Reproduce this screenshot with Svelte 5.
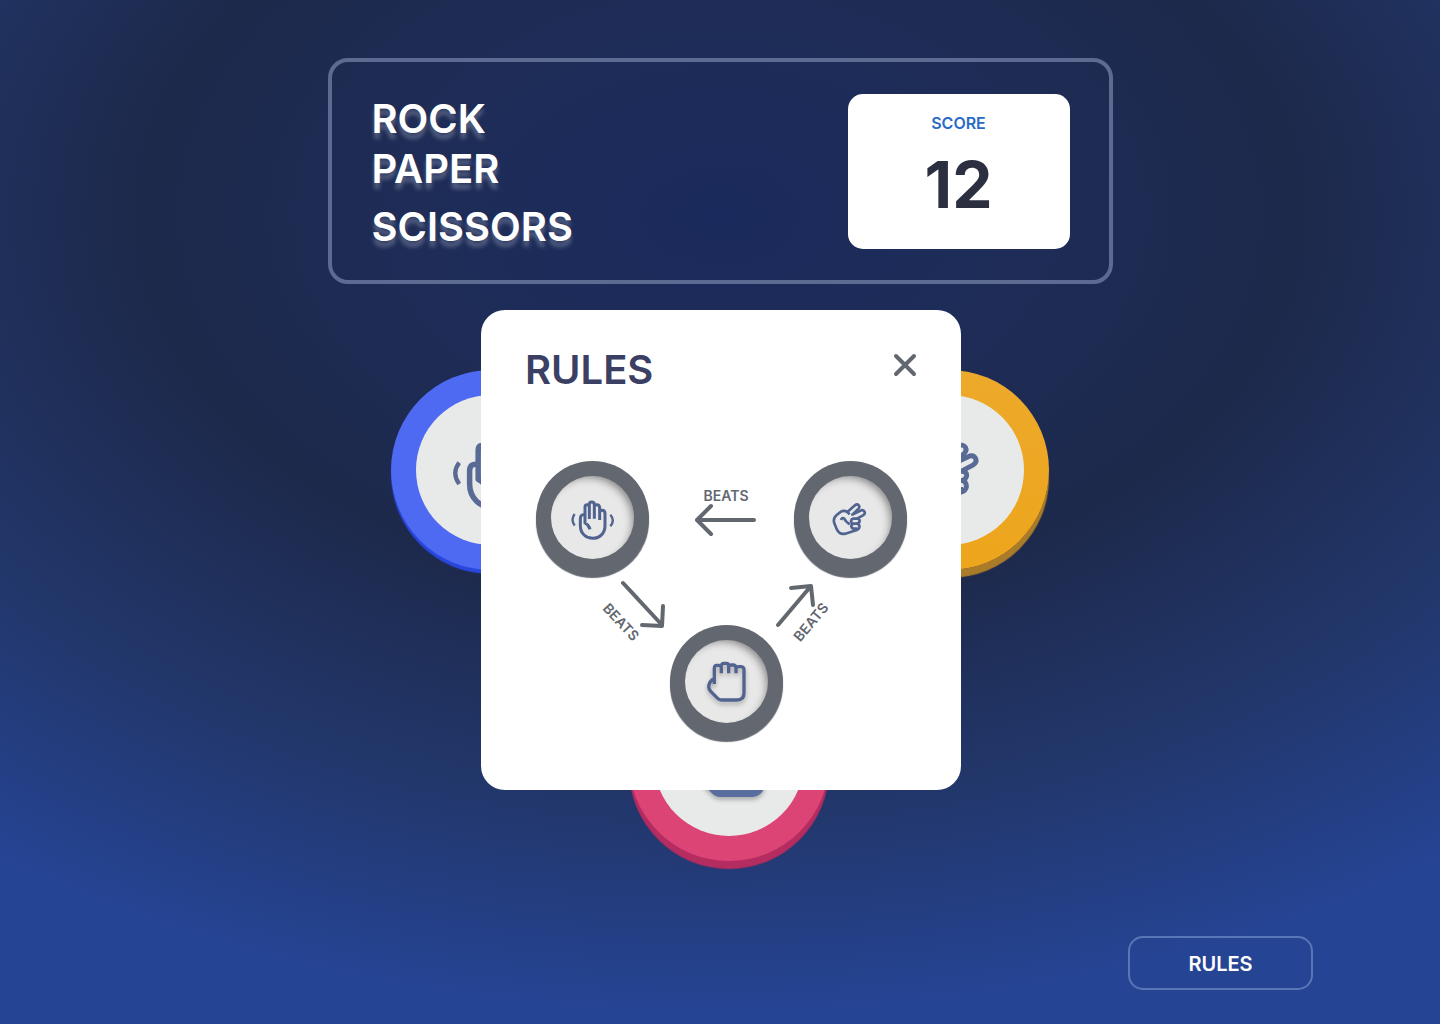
<script>
  let open = $state(true);
  const score = 12;
</script>

{#snippet hand(kind)}
  {#if kind === 'paper'}
    <svg class="icon" viewBox="129 130 144 144" aria-hidden="true">
      <path d="M180 193Q166 190 166 204V225C166 249 184 263 203 263C224 263 240 248 240 225V188Q239 179 232 179Q227 179 224 182" />
      <path d="M224 208V171Q223 162 216 162Q211 162 208 165M208 204V162Q208 154 200 154Q193 154 193 162V205M193 165Q190 162 186 162Q180 162 180 170V217Q192 223 195 236" />
      <path class="thin" d="M149 190Q136 207 149 225M256 192Q271 209 256 227" />
    </svg>
  {:else if kind === 'scissors'}
    <svg class="icon fine" viewBox="122 130 144 144" aria-hidden="true">
      <path d="M193 191L186 184Q176 178 167 183L154 193Q142 203 147 218L155 237Q163 253 180 249L217 237Q224 233 222 225Q220 219 213 219" />
      <path d="M186 184L209 164Q216 158 221 165Q224 170 218 176L201 192L228 179Q235 177 238 184Q240 190 233 194L216 203" />
      <path d="M204 204H216Q223 205 223 211Q222 218 215 219H204Q197 218 197 211Q198 205 204 204ZM204 219Q197 222 198 228Q200 235 207 234H217" />
      <path d="M167 208Q170 200 176 203Q181 213 193 221" />
    </svg>
  {:else}
    <svg class="icon lifted" viewBox="126 125 144 144" aria-hidden="true">
      <path d="M163 203V156Q163 147 170 147H176Q184 147 184 155V171M184 149Q185 141 191 141H199Q206 141 206 149V171M206 151Q208 146 213 146H220Q228 147 228 155V171M228 156Q230 151 236 151H243Q252 152 252 160V230Q252 251 231 251H184Q178 251 173 246L152 225Q144 215 147 206Q150 192 163 187" />
    </svg>
  {/if}
{/snippet}

<div class="page">
  <header class="scoreboard">
    <h1><span>ROCK</span><span>PAPER</span><span class="last">SCISSORS</span></h1>
    <div class="score">
      <span class="score-label">SCORE</span>
      <strong>{score}</strong>
    </div>
  </header>

  <main class="board">
    <div class="row">
      <button class="token paper" aria-label="Paper"><span class="face">{@render hand('paper')}</span></button>
      <button class="token scissors" aria-label="Scissors"><span class="face">{@render hand('scissors')}</span></button>
    </div>
    <div class="row bottom">
      <button class="token rock" aria-label="Rock"><span class="face">{@render hand('rock')}</span></button>
    </div>
  </main>

  <footer>
    <button class="rules-button" onclick={() => (open = true)}>RULES</button>
  </footer>
</div>

{#if open}
  <div class="overlay">
    <div class="modal" role="dialog" aria-modal="true" aria-labelledby="rules-title">
      <div class="modal-head">
        <h2 id="rules-title">RULES</h2>
        <button class="close" aria-label="Close" onclick={() => (open = false)}>
          <svg viewBox="0 0 24 24" aria-hidden="true"><path d="M3 3L21 21M21 3L3 21" /></svg>
        </button>
      </div>
      <div class="diagram">
        <div class="node n-paper"><span class="face">{@render hand('paper')}</span></div>
        <div class="node n-scissors"><span class="face">{@render hand('scissors')}</span></div>
        <div class="node n-rock"><span class="face">{@render hand('rock')}</span></div>
        <svg class="links" viewBox="0 0 371 281">
          <path d="M218 59H162M175 45L161 59L175 73" />
          <path d="M87 122L126 164M127 145L126 165L106 164" />
          <path d="M242 164L275 125M255 127L275 125L277 144" />
          <text x="190" y="40">BEATS</text>
          <text transform="translate(85 161) rotate(47)" y="5">BEATS</text>
          <text transform="translate(275 161) rotate(-50)" y="5">BEATS</text>
        </svg>
      </div>
    </div>
  </div>
{/if}

<style>
  :global(body) {
    margin: 0;
    font-family: Inter, 'Liberation Sans', sans-serif;
  }

  .page {
    box-sizing: border-box;
    min-height: 100vh;
    padding: 58px 24px 34px;
    display: flex;
    flex-direction: column;
    align-items: center;
    background: radial-gradient(
      ellipse 85% 800px at 50% 215px,
      #1a2a5c 0%,
      #1e2c57 25%,
      #1d294b 47%,
      #22376c 75%,
      #254494 100%
    );
  }

  button {
    font: inherit;
    padding: 0;
    border: 0;
    background: none;
    cursor: pointer;
  }

  .scoreboard {
    box-sizing: border-box;
    width: 100%;
    max-width: 785px;
    padding: 32px 39px 28px 40px;
    border: 4px solid #5b6b91;
    border-radius: 20px;
    display: flex;
    justify-content: space-between;
    align-items: flex-start;
  }

  h1 {
    margin: 0;
    display: flex;
    flex-direction: column;
    color: #fff;
    font-size: 40px;
    font-weight: 600;
    line-height: 50px;
    text-shadow: 0 6px 4px rgba(255, 255, 255, 0.25);
  }

  .last {
    margin-top: 8px;
  }

  .score {
    box-sizing: border-box;
    width: 222px;
    min-height: 155px;
    padding: 19px 16px;
    border-radius: 15px;
    background: #fff;
    display: flex;
    flex-direction: column;
    align-items: center;
    gap: 16px;
  }

  .score-label {
    color: #2a6ac6;
    font-size: 16px;
    font-weight: 600;
    line-height: 20px;
  }

  .score strong {
    color: #2b2f3f;
    font-size: 64px;
    font-weight: 700;
    line-height: 72px;
  }

  .board {
    width: 100%;
    max-width: 658px;
    margin-top: 86px;
    display: flex;
    flex-direction: column;
    gap: 91px;
  }

  .row {
    display: flex;
    justify-content: space-between;
  }

  .bottom {
    justify-content: center;
    padding-left: 18px;
  }

  .token,
  .node,
  .face {
    border-radius: 50%;
    display: grid;
    place-items: center;
  }

  .token {
    width: 200px;
    height: 200px;
  }

  .token .face {
    width: 150px;
    height: 150px;
    background: #e8eaea;
  }

  .token .icon {
    width: 88px;
    height: 88px;
    stroke: #596a94;
  }

  .token .lifted {
    fill: #596e9e;
    stroke: #596e9e;
  }

  .paper {
    background: #4e69f2;
    box-shadow: 0 4px 1px #2a47df;
  }

  .scissors {
    background: linear-gradient(#eda92a, #eda51c);
    box-shadow: 0 8px 1px #aa7c29;
  }

  .rock {
    background: #dd4476;
    box-shadow: 0 8px 1px #b52c60;
  }

  .icon {
    fill: none;
    stroke: #51648f;
    stroke-width: 9;
    stroke-linejoin: round;
  }

  .thin {
    stroke-width: 7;
  }

  .fine {
    stroke-width: 8;
  }

  .lifted {
    stroke-width: 10;
    filter: drop-shadow(0 3px 2px rgba(0, 0, 0, 0.25));
  }

  footer {
    box-sizing: border-box;
    width: 100%;
    margin-top: auto;
    padding-right: 103px;
    display: flex;
    justify-content: flex-end;
  }

  .rules-button {
    width: 185px;
    height: 54px;
    padding-top: 2px;
    border: 2px solid #5877b7;
    border-radius: 15px;
    color: #fff;
    font-size: 20px;
    font-weight: 600;
  }

  .overlay {
    position: fixed;
    inset: 0;
    padding: 76px 0 0 2px;
    display: grid;
    place-content: center;
  }

  .modal {
    box-sizing: border-box;
    width: 480px;
    min-height: 480px;
    padding: 35px 44px 48px;
    border-radius: 24px;
    background: #fff;
  }

  .modal-head {
    display: flex;
    justify-content: space-between;
    align-items: flex-start;
  }

  h2 {
    margin: 0;
    color: #3b3f63;
    font-size: 40px;
    font-weight: 600;
    line-height: 50px;
  }

  .close {
    width: 24px;
    height: 24px;
    margin-top: 8px;
  }

  .close svg {
    display: block;
    fill: none;
    stroke: #636870;
    stroke-width: 4;
    stroke-linecap: round;
  }

  .diagram {
    position: relative;
    width: 371px;
    height: 281px;
    margin: 66px auto 0;
  }

  .node {
    position: absolute;
    width: 113px;
    height: 113px;
    background: #636870;
    box-shadow: 0 4px 1px #636870;
  }

  .node .face {
    width: 83px;
    height: 83px;
    background: #e8e8e8;
    box-shadow: inset -5px 5px 8px -4px rgba(0, 0, 0, 0.45);
  }

  .node .icon {
    width: 48px;
    height: 48px;
  }

  .n-paper {
    left: 0;
    top: 0;
  }

  .n-scissors {
    right: 0;
    top: 0;
  }

  .n-rock {
    left: 134px;
    bottom: 4px;
  }

  .links {
    position: absolute;
    inset: 0;
    fill: none;
    stroke: #636870;
    stroke-width: 4;
    stroke-linejoin: round;
    stroke-linecap: round;
  }

  .links text {
    fill: #636870;
    stroke: none;
    font-size: 14px;
    font-weight: 600;
    text-anchor: middle;
  }
</style>
